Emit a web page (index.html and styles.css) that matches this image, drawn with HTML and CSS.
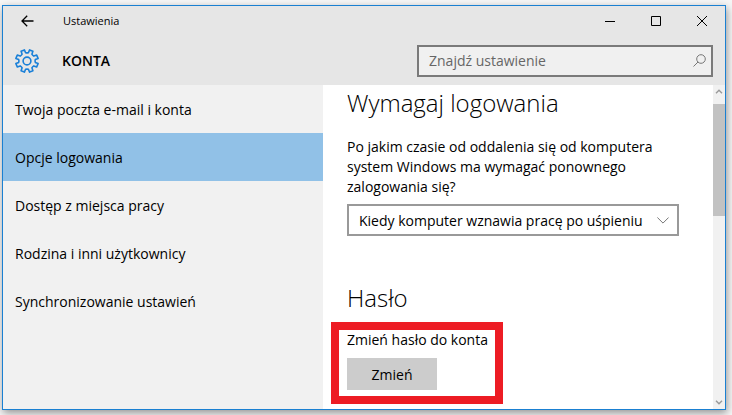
FILE: index.html
```html
<!DOCTYPE html>
<html lang="pl">
<head>
    <title>Ustawienia</title>
    <meta charset="UTF-8">
    <meta name="viewport" content="width=device-width, initial-scale=1.0">
    <link rel="stylesheet" href="styles.css">
</head>
<body>
    <div class="window">
        <header class="header">
            <div class="title-bar">
                <button class="title-button back-button" aria-label="Wstecz">
                    <svg width="13" height="12" viewBox="0 0 13 12"><path d="M12.5 6H1.2M6.2 .8L1 6l5.2 5.2"/></svg>
                </button>
                <span class="window-title">Ustawienia</span>
                <button class="title-button" aria-label="Minimalizuj">
                    <svg width="10" height="10" viewBox="0 0 10 10"><path d="M0 5.5h10"/></svg>
                </button>
                <button class="title-button" aria-label="Maksymalizuj">
                    <svg width="10" height="10" viewBox="0 0 10 10"><path d="M.5 .5h9v9h-9z"/></svg>
                </button>
                <button class="title-button" aria-label="Zamknij">
                    <svg width="10" height="10" viewBox="0 0 10 10"><path d="M0 0l10 10M10 0L0 10"/></svg>
                </button>
            </div>
            <div class="page-bar">
                <svg class="gear" width="24" height="24" viewBox="-12 -12 24 24">
                    <path d="M8.3 1.4L11.1 2.6 9.7 5.9 6.8 4.9Q5.6 5.6 4.9 6.8L5.9 9.7 2.6 11.1 1.4 8.3Q0 7.9-1.4 8.3L-2.6 11.1-5.9 9.7-4.9 6.8Q-5.6 5.6-6.8 4.9L-9.7 5.9-11.1 2.6-8.3 1.4Q-7.9 0-8.3-1.4L-11.1-2.6-9.7-5.9-6.8-4.9Q-5.6-5.6-4.9-6.8L-5.9-9.7-2.6-11.1-1.4-8.3Q0-7.9 1.4-8.3L2.6-11.1 5.9-9.7 4.9-6.8Q5.6-5.6 6.8-4.9L9.7-5.9 11.1-2.6 8.3-1.4Q7.9 0 8.3 1.4z"/>
                    <circle r="3.9"/>
                </svg>
                <h1 class="page-title">KONTA</h1>
                <div class="search">
                    <input type="text" class="search-input" placeholder="Znajdź ustawienie" aria-label="Znajdź ustawienie">
                    <svg class="search-icon" width="13" height="13" viewBox="0 0 13 13"><circle cx="8" cy="5" r="4.3"/><path d="M5 8L.5 12.5"/></svg>
                </div>
            </div>
        </header>

        <div class="main">
            <nav class="sidebar">
                <a href="#" class="nav-item">Twoja poczta e-mail i konta</a>
                <a href="#" class="nav-item active">Opcje logowania</a>
                <a href="#" class="nav-item">Dostęp z miejsca pracy</a>
                <a href="#" class="nav-item">Rodzina i inni użytkownicy</a>
                <a href="#" class="nav-item">Synchronizowanie ustawień</a>
            </nav>

            <main class="content">
                <section class="section">
                    <h2>Wymagaj logowania</h2>
                    <label class="description" for="requireLogin">Po jakim czasie od oddalenia się od komputera system Windows ma wymagać ponownego zalogowania się?</label>
                    <div class="dropdown">
                        <select id="requireLogin">
                            <option>Kiedy komputer wznawia pracę po uśpieniu</option>
                            <option>Nigdy</option>
                        </select>
                        <svg class="dropdown-icon" width="12" height="7" viewBox="0 0 12 7"><path d="M.4 .5L6 6.1 11.6 .5"/></svg>
                    </div>
                </section>

                <section class="section">
                    <h2>Hasło</h2>
                    <div class="highlight">
                        <p>Zmień hasło do konta</p>
                        <button class="change-button">Zmień</button>
                    </div>
                </section>
            </main>

            <div class="scrollbar" aria-hidden="true">
                <svg width="8" height="5" viewBox="0 0 8 5"><path d="M1 4.2L4 1.2 7 4.2"/></svg>
                <div class="track">
                    <div class="thumb"></div>
                </div>
                <svg width="8" height="5" viewBox="0 0 8 5"><path d="M1 .8L4 3.8 7 .8"/></svg>
            </div>
        </div>
    </div>
</body>
</html>
```

FILE: styles.css
```css
* {
    margin: 0;
    padding: 0;
    box-sizing: border-box;
    font-family: "Segoe UI", "Open Sans", "Noto Sans", sans-serif;
}

body {
    min-height: 100vh;
    padding: 5px 6px 5px 2px;
    display: flex;
    background: #f6f6f6;
    color: #000;
    font-size: 14px;
    line-height: 20px;
}

svg {
    display: block;
    fill: none;
    stroke: #000;
}

.window {
    flex: 1;
    display: flex;
    flex-direction: column;
    border: 1px solid #1a80d2;
    background: #fff;
    box-shadow: 1px 3px 8px rgba(0, 0, 0, 0.4);
}

/* Header */
.header {
    background: #e6e6e6;
}

.title-bar {
    height: 30px;
    display: flex;
    align-items: center;
}

.title-button {
    width: 46px;
    height: 30px;
    display: flex;
    align-items: center;
    justify-content: center;
    border: none;
    background: transparent;
}

.title-button:hover {
    background: #d0d0d0;
}

.back-button {
    width: 48px;
}

.back-button svg {
    stroke-width: 1.3;
}

.window-title {
    flex: 1;
    padding-left: 12px;
    font-size: 11px;
}

.page-bar {
    height: 49px;
    padding: 0 12px;
    display: flex;
    align-items: center;
}

.gear {
    stroke: #1a80d8;
    stroke-width: 1.6;
    stroke-linejoin: round;
}

.page-title {
    flex: 1;
    padding-left: 23px;
    font-size: 14px;
    font-weight: 600;
}

.search {
    position: relative;
    flex: 0 1 296px;
}

.search-input {
    width: 100%;
    height: 32px;
    padding: 0 32px 0 10px;
    display: block;
    border: 2px solid #7a7a7a;
    background: #f0f0f0;
    font-size: 14px;
}

.search-input::placeholder {
    color: #666;
    opacity: 1;
}

.search-icon {
    position: absolute;
    top: 9px;
    right: 7px;
    stroke: #777;
}

/* Body of the window */
.main {
    flex: 1;
    display: flex;
}

.sidebar {
    flex: 0 0 320px;
    background: #f1f1f1;
}

.nav-item {
    height: 48px;
    padding: 2px 12px 0;
    display: flex;
    align-items: center;
    color: #000;
    text-decoration: none;
}

.nav-item:hover {
    background: #e2e2e2;
}

.nav-item.active {
    background: #91c1e7;
}

.content {
    flex: 1;
    padding: 2px 24px 0;
    display: flex;
    flex-direction: column;
    gap: 46px;
}

.section h2 {
    font-size: 24px;
    font-weight: 300;
    line-height: 32px;
}

.description {
    max-width: 332px;
    margin: 18px 0 7px;
    display: block;
}

.dropdown {
    position: relative;
    max-width: 332px;
}

.dropdown select {
    width: 100%;
    height: 32px;
    padding: 0 32px 0 10px;
    display: block;
    appearance: none;
    border: 2px solid #999;
    border-radius: 0;
    background: #fff;
    color: #000;
    font-size: 14px;
}

.dropdown-icon {
    position: absolute;
    top: 13px;
    right: 10px;
    stroke: #777;
    pointer-events: none;
}

.highlight {
    width: 172px;
    height: 82px;
    margin: 8px 0 0 -16px;
    padding: 0 8px;
    border: 8px solid #ed1c24;
    white-space: nowrap;
}

.change-button {
    width: 90px;
    height: 32px;
    margin-top: 8px;
    border: none;
    background: #ccc;
    font-size: 14px;
}

/* Scrollbar */
.scrollbar {
    width: 12px;
    padding: 4px 0;
    display: flex;
    flex-direction: column;
    align-items: center;
    background: #f1f1f1;
}

.scrollbar svg {
    stroke: #999;
    stroke-width: 1.4;
}

.track {
    flex: 1;
    align-self: stretch;
    padding: 10px 0;
}

.thumb {
    height: 112px;
    background: #c2c2c2;
}
```
